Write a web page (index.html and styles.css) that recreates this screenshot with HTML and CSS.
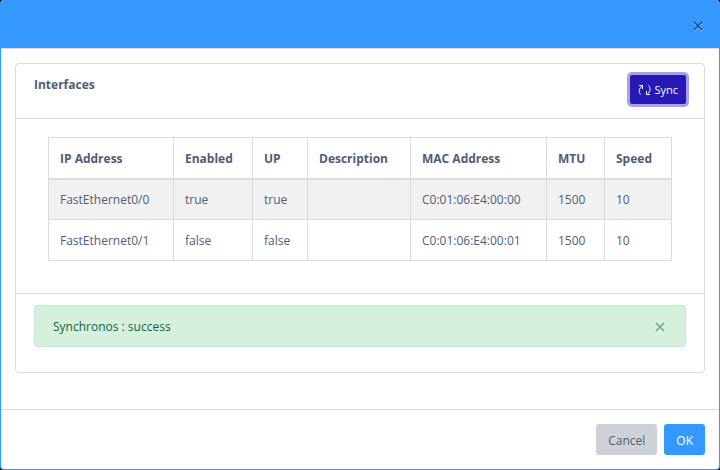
FILE: index.html
```
<!DOCTYPE html>
<html lang="en">
<head>
<meta charset="utf-8">
<meta name="viewport" content="width=device-width, initial-scale=1">
<title>Interfaces</title>
<link rel="stylesheet" href="styles.css">
</head>
<body>
<div class="modal" role="dialog" aria-label="Interfaces">
  <header class="modal-header">
    <button class="close" type="button" aria-label="Close dialog">
      <svg class="cross" viewBox="0 0 10 10" aria-hidden="true">
        <path class="cross-shadow" d="M1 2l8 8M9 2l-8 8"/>
        <path d="M1 1l8 8M9 1l-8 8"/>
      </svg>
    </button>
  </header>
  <main class="modal-body">
    <section class="card">
      <div class="card-header">
        <h1 class="card-title">Interfaces</h1>
        <button class="sync" type="button">
          <svg class="sync-icon" viewBox="0 0 13 12" aria-hidden="true">
            <path d="M2.500 10.500C.5 8 1 4.500 4 2M1 1.500h3.500V5"/>
            <path d="M10.500 1.500C13 4 12.500 7.500 9.500 10M12 10.500H8.500V7"/>
          </svg>
          <span>Sync</span>
        </button>
      </div>
      <div class="card-body">
        <table class="table">
          <colgroup>
            <col class="col-name"><col class="col-enabled"><col class="col-up"><col class="col-description"><col class="col-mac"><col class="col-mtu"><col class="col-speed">
          </colgroup>
          <thead>
            <tr><th>IP Address</th><th>Enabled</th><th>UP</th><th>Description</th><th>MAC Address</th><th>MTU</th><th>Speed</th></tr>
          </thead>
          <tbody>
            <tr><td>FastEthernet0/0</td><td>true</td><td>true</td><td></td><td>C0:01:06:E4:00:00</td><td>1500</td><td>10</td></tr>
            <tr><td>FastEthernet0/1</td><td>false</td><td>false</td><td></td><td>C0:01:06:E4:00:01</td><td>1500</td><td>10</td></tr>
          </tbody>
        </table>
      </div>
      <div class="card-footer">
        <div class="alert" role="alert">
          <span>Synchronos : success</span>
          <button class="close close-alert" type="button" aria-label="Dismiss">
            <svg class="cross" viewBox="0 0 10 10" aria-hidden="true"><path d="M1 1l8 8M9 1l-8 8"/></svg>
          </button>
        </div>
      </div>
    </section>
  </main>
  <footer class="modal-footer">
    <button class="btn btn-cancel" type="button">Cancel</button>
    <button class="btn btn-ok" type="button">OK</button>
  </footer>
</div>
</body>
</html>
```
FILE: styles.css
```
* { box-sizing: border-box; }

body {
  margin: 0;
  background: #000;
  color: #4f5d73;
  font: 12px/18px "Open Sans", "Noto Sans", sans-serif;
}

button {
  margin: 0;
  border: 0;
  font: inherit;
  cursor: pointer;
}

.modal {
  display: flex;
  flex-direction: column;
  min-height: 100vh;
  border: 1px solid #39f;
  border-top: 0;
  border-radius: 4px;
  background: #fff;
  overflow: hidden;
}

.modal-header {
  display: flex;
  justify-content: flex-end;
  align-items: center;
  padding: 20px 16px 16px;
  height: 49px;
  background: #39f;
  border-bottom: 1px solid #d8dbe0;
}

.close {
  display: flex;
  padding: 0;
  background: none;
  color: #1f4d80;
}

.cross {
  width: 10px;
  height: 10px;
  overflow: visible;
  fill: none;
  stroke: currentColor;
  stroke-width: 1.7;
}

.cross-shadow { stroke: #8fc5ff; }

.modal-body {
  flex: 1;
  padding: 14px;
}

.card {
  border: 1px solid #d8dbe0;
  border-radius: 4px;
}

.card-header {
  display: flex;
  justify-content: space-between;
  align-items: flex-start;
  padding: 11px 18px 14px;
  border-bottom: 1px solid #d8dbe0;
}

.card-title {
  margin: 0;
  font-size: 12px;
  line-height: 20px;
  font-weight: 700;
}

.sync {
  display: flex;
  align-items: center;
  gap: 3px;
  height: 29px;
  padding: 0 8px;
  border-radius: 2px;
  background: #2819b4;
  box-shadow: 0 0 0 3px #a9a0ec;
  color: #fff;
  font-size: 11px;
}

.sync-icon {
  width: 13px;
  height: 12px;
  fill: none;
  stroke: currentColor;
}

.card-body { padding: 18px 32px 32px; }

.table {
  width: 100%;
  table-layout: fixed;
  border-collapse: collapse;
}

.table th,
.table td {
  height: 41px;
  padding: 2px 11px 0;
  border: 1px solid #d8dbe0;
  text-align: left;
}

.table thead th { border-bottom-width: 2px; }
.table tbody tr:nth-child(odd) { background: #f1f1f1; }

.col-name { width: 125px; }
.col-enabled { width: 79px; }
.col-up { width: 55px; }
.col-description { width: 103px; }
.col-mac { width: 136px; }
.col-mtu { width: 58px; }
.col-speed { width: 67px; }

.card-footer {
  padding: 11px 18px 25px;
  border-top: 1px solid #d8dbe0;
}

.alert {
  display: flex;
  justify-content: space-between;
  align-items: center;
  height: 42px;
  padding: 2px 20px 0 18px;
  border: 1px solid #c4ebd1;
  border-radius: 3px;
  background: #d5f1de;
  color: #18603a;
}

.close-alert { color: #75a98a; }

.modal-footer {
  display: flex;
  justify-content: flex-end;
  gap: 7px;
  padding: 14px;
  border-top: 1px solid #d8dbe0;
}

.btn {
  height: 31px;
  padding: 2px 12px 0;
  border-radius: 3px;
}

.btn-cancel { background: #ced2d8; color: #4f5d73; }
.btn-ok { background: #39f; color: #fff; }
```
